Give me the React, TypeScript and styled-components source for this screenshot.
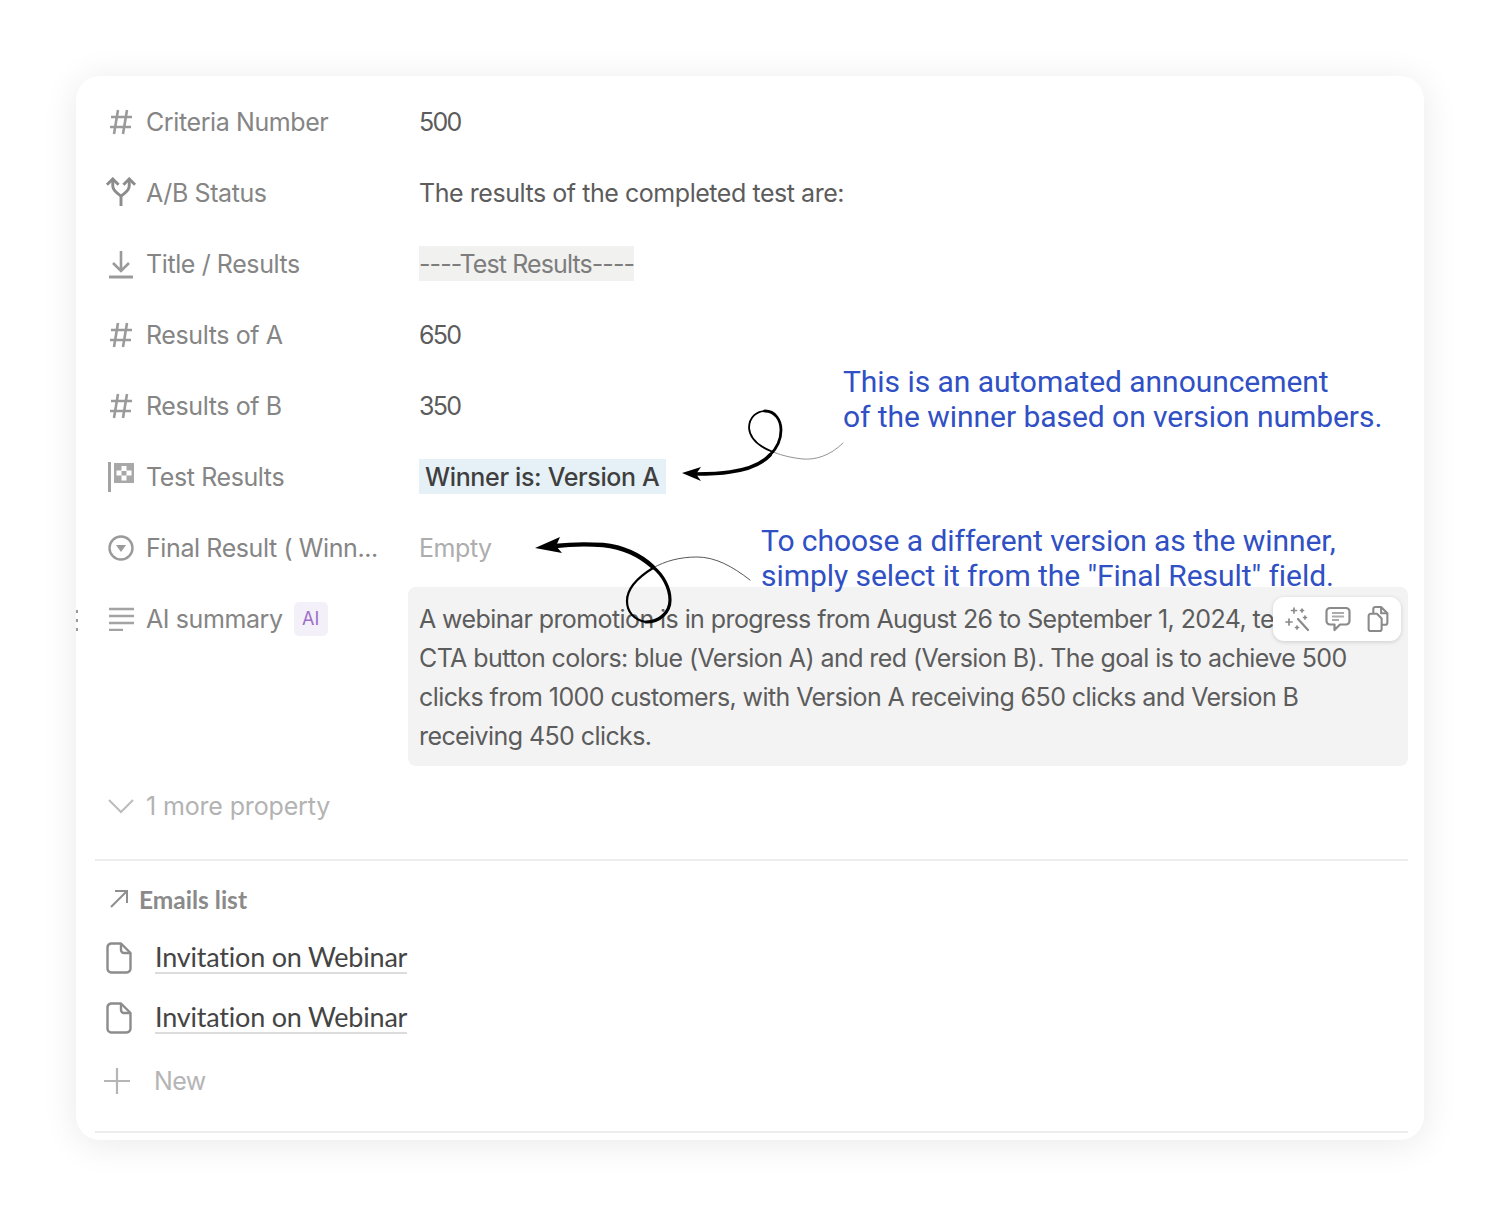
import React from 'react';
import styled, { createGlobalStyle } from 'styled-components';

const GlobalStyle = createGlobalStyle`
  html, body { margin: 0; padding: 0; background: #fff; }
  body { font-family: 'Inter', 'Noto Sans', sans-serif; }
`;

const HashIcon = () => (
  <IconSvg viewBox="0 0 26 30" fill="none" stroke="#9a9a9a" strokeWidth="2.6">
    <path d="M10 3 L6 27 M19 3 L15 27 M3 10 H24 M2 20 H23" />
  </IconSvg>
);

const SplitIcon = () => (
  <IconSvg viewBox="0 0 33 31" fill="none" stroke="#8c8c8c" strokeWidth="3" $wide>
    <path d="M16.5 30 V20 C13 16 8 15 8 9 V2 M16.5 20 C20 16 25 15 25 9 V2" />
    <path d="M2 8 L8 2 L14 8 M19 8 L25 2 L31 8" />
  </IconSvg>
);

const DownloadIcon = () => (
  <IconSvg viewBox="0 0 26 30" fill="none" stroke="#9a9a9a" strokeWidth="2.6">
    <path d="M13 2 V21 M5 14 L13 22 L21 14" />
    <path d="M1 28 H25" strokeWidth="3" />
  </IconSvg>
);

const FormulaIcon = () => (
  <IconSvg viewBox="0 0 26 30" fill="none">
    <path d="M1.5 0 V30" stroke="#a3a3a3" strokeWidth="3" />
    <path d="M6 1 H26 V21 H6 Z" fill="#a8a8a8" />
    <path d="M13.5 4 H18.5 V9 H13.5 Z M8.5 8.5 H13.5 V13.5 H8.5 Z M18.5 8.5 H23.5 V13.5 H18.5 Z M13.5 13.5 H18.5 V18.5 H13.5 Z" fill="#fff" />
  </IconSvg>
);

const SelectIcon = () => (
  <IconSvg viewBox="0 0 26 26" fill="none" stroke="#9a9a9a" strokeWidth="2.4">
    <circle cx="13" cy="13" r="11.5" />
    <path d="M8 10 H18 L13 17 Z" fill="#9a9a9a" stroke="none" />
  </IconSvg>
);

const LinesIcon = () => (
  <IconSvg viewBox="0 0 26 24" fill="none" stroke="#a3a3a3" strokeWidth="2.4">
    <path d="M1 2 H26 M1 9 H26 M1 16 H26 M1 23 H15" />
  </IconSvg>
);

const ChevronIcon = () => (
  <IconSvg viewBox="0 0 26 16" fill="none" stroke="#bcbcbc" strokeWidth="2">
    <path d="M1 2 L13 14 L25 2" />
  </IconSvg>
);

const DocIcon = () => (
  <DocSvg viewBox="0 0 26 32" fill="none" stroke="#8c8c8c" strokeWidth="2.4" strokeLinejoin="round">
    <path d="M5 1.5 H15 L24.5 11 V26 A4 4 0 0 1 20.5 30.5 H5 A4 4 0 0 1 1.5 26 V5 A4 4 0 0 1 5 1.5 Z" />
    <path d="M15 1.5 V8 A3 3 0 0 0 18 11 H24.5" />
  </DocSvg>
);

const Wand = () => (
  <ToolSvg viewBox="0 0 26 26" fill="none" stroke="#8a8a8a" strokeWidth="2.2" strokeLinecap="round">
    <path d="M14 13 L24 24" />
    <path d="M10 2 V7 M7.5 4.5 H12.5 M18 3 V6 M16.5 4.5 H19.5 M5 13 V19 M2 16 H8 M13 20 V23 M11.5 21.5 H14.5 M21 10 V13 M19.5 11.5 H22.5" strokeWidth="1.7" />
  </ToolSvg>
);

const Comment = () => (
  <ToolSvg viewBox="0 0 26 26" fill="none" stroke="#8a8a8a" strokeWidth="2.2" strokeLinejoin="round">
    <path d="M5 2 H21 A3.5 3.5 0 0 1 24.5 5.5 V15 A3.5 3.5 0 0 1 21 18.5 H15 L9.5 24 V18.5 H5 A3.5 3.5 0 0 1 1.5 15 V5.5 A3.5 3.5 0 0 1 5 2 Z" />
    <path d="M7 7 H19 M7 10.5 H19 M7 14 H14" stroke="#ababab" strokeWidth="2" />
  </ToolSvg>
);

const Copies = () => (
  <ToolSvg viewBox="0 0 20 25" fill="none" stroke="#8a8a8a" strokeWidth="2" strokeLinejoin="round">
    <path d="M3 7.5 H9 L13.5 12 V22 A2 2 0 0 1 11.5 24 H3 A2 2 0 0 1 1 22 V9.5 A2 2 0 0 1 3 7.5 Z" />
    <path d="M5.5 7.5 V3 A2 2 0 0 1 7.5 1 H13 L19 7 V16 A2 2 0 0 1 17 18 H13.5" />
    <path d="M13 1 V7 H19" />
  </ToolSvg>
);

export default function App() {
  const properties = [
    { icon: <HashIcon />, label: 'Criteria Number', value: <Value $digits>500</Value> },
    { icon: <SplitIcon />, label: 'A/B Status', value: <Value>The results of the completed test are:</Value> },
    { icon: <DownloadIcon />, label: 'Title / Results', value: <Tag>----Test Results----</Tag> },
    { icon: <HashIcon />, label: 'Results of A', value: <Value $digits>650</Value> },
    { icon: <HashIcon />, label: 'Results of B', value: <Value $digits>350</Value> },
    { icon: <FormulaIcon />, label: 'Test Results', value: <Tag $winner>Winner is: Version A</Tag> },
    { icon: <SelectIcon />, label: 'Final Result ( Winn...', value: <Value $empty>Empty</Value> },
  ];

  return (
    <Page>
      <GlobalStyle />
      <Card>
        <DragDots>
          <i />
          <i />
          <i />
        </DragDots>

        {properties.map((p) => (
          <Row key={p.label}>
            <Label>
              <IconSlot>{p.icon}</IconSlot>
              <span>{p.label}</span>
            </Label>
            <div>{p.value}</div>
          </Row>
        ))}

        <SummaryRow>
          <Label $summary>
            <IconSlot>
              <LinesIcon />
            </IconSlot>
            <span>AI summary</span>
            <AiBadge>AI</AiBadge>
          </Label>
          <SummaryBox>
            A webinar promotion is in progress from August 26 to September 1, 2024, testing two CTA button colors: blue
            (Version A) and red (Version B). The goal is to achieve 500 clicks from 1000 customers, with Version A
            receiving 650 clicks and Version B receiving 450 clicks.
            <Toolbar>
              <Wand />
              <Comment />
              <Copies />
            </Toolbar>
          </SummaryBox>
        </SummaryRow>

        <MoreRow>
          <IconSlot>
            <ChevronIcon />
          </IconSlot>
          <span>1 more property</span>
        </MoreRow>

        <Divider />

        <RelationTitle>
          <svg width="20" height="20" viewBox="0 0 20 20" fill="none" stroke="#8f8f8f" strokeWidth="2">
            <path d="M2 18 L18 2 M6 2 H18 V14" />
          </svg>
          <span>Emails list</span>
        </RelationTitle>

        <LinkRow>
          <DocIcon />
          <LinkText>Invitation on Webinar</LinkText>
        </LinkRow>
        <LinkRow>
          <DocIcon />
          <LinkText>Invitation on Webinar</LinkText>
        </LinkRow>

        <NewRow>
          <svg width="28" height="28" viewBox="0 0 28 28" fill="none" stroke="#b5b5b5" strokeWidth="2.2">
            <path d="M14 1 V27 M1 14 H27" />
          </svg>
          <span>New</span>
        </NewRow>

        <BottomDivider />

        <Note $top={288} $left={767}>
          This is an automated announcement
          <br />
          of the winner based on version numbers.
        </Note>
        <Note $top={447} $left={685}>
          To choose a different version as the winner,
          <br />
          simply select it from the "Final Result" field.
        </Note>

        <Arrows viewBox="76 76 1348 1064" fill="none" stroke="#000" strokeLinecap="round">
          <path d="M843 443 C830 456 815 460 803 459 C793 458 783 456 773 452" stroke="#777" strokeWidth="0.8" />
          <path d="M773 452 C760 447 750 440 749 428 C749 417 757 411 765 411" strokeWidth="1.8" />
          <path d="M765 411 C775 411 781 420 781 430 C781 440 776 449 770 455" strokeWidth="2.8" />
          <path d="M770 455 C760 466 745 470 730 472 C718 474 706 474 695 474" strokeWidth="3.6" />
          <path d="M682 473 L701 467 L696 474 L701 481 Z" fill="#000" stroke="none" />

          <path d="M750 580 C732 566 715 557 697 557 C680 557 665 561 653 568" stroke="#444" strokeWidth="0.9" />
          <path d="M653 568 C640 576 627 587 627 601 C627 612 634 620 646 622" strokeWidth="2.2" />
          <path d="M646 622 C660 622 670 612 670 600 C670 588 663 575 653 567" strokeWidth="3.2" />
          <path d="M653 567 C640 555 622 547 603 545 C588 544 572 544 555 546" strokeWidth="4.4" />
          <path d="M535 548 L560 537 L556 546 L562 553 Z" fill="#000" stroke="none" />
        </Arrows>
      </Card>
    </Page>
  );
}

const Page = styled.div`
  padding: 76px 76px 75px;
  height: 1215px;
  box-sizing: border-box;
`;

const Card = styled.div`
  position: relative;
  width: 1348px;
  height: 1064px;
  box-sizing: border-box;
  padding: 10px 16px 0 19px;
  background: #fff;
  border-radius: 24px;
  box-shadow: 0 4px 36px rgba(0, 0, 0, 0.09);
`;

const DragDots = styled.div`
  position: absolute;
  left: 0;
  top: 534px;
  display: flex;
  flex-direction: column;
  gap: 6px;

  i {
    display: block;
    width: 2px;
    height: 3px;
    background: #9a9a9a;
  }
`;

const Row = styled.div`
  display: grid;
  grid-template-columns: 324px 1fr;
  align-items: center;
  height: 71px;
`;

const Label = styled.div<{ $summary?: boolean }>`
  display: flex;
  align-items: center;
  height: ${(p) => (p.$summary ? '64px' : '34px')};
  font-size: 25px;
  letter-spacing: -0.4px;
  color: #858585;
  white-space: nowrap;
`;

const IconSlot = styled.div`
  display: flex;
  align-items: center;
  justify-content: center;
  width: 51px;
  flex: none;
`;

const IconSvg = styled.svg<{ $wide?: boolean }>`
  display: block;
  width: ${(p) => (p.$wide ? '32px' : '26px')};
  height: auto;
  max-height: 32px;
`;

const Value = styled.span<{ $empty?: boolean; $digits?: boolean }>`
  font-size: 25px;
  letter-spacing: ${(p) => (p.$digits ? '-1.7px' : '-0.45px')};
  color: ${(p) => (p.$empty ? '#adadad' : '#5c5c5c')};
`;

const Tag = styled.span<{ $winner?: boolean }>`
  display: inline-block;
  height: 35px;
  line-height: 37px;
  padding: 0 ${(p) => (p.$winner ? '6px' : '0')};
  font-size: 25px;
  letter-spacing: ${(p) => (p.$winner ? '-0.35px' : '-0.9px')};
  font-weight: ${(p) => (p.$winner ? 500 : 400)};
  color: ${(p) => (p.$winner ? '#3f3f3f' : '#7d7d7d')};
  background: ${(p) => (p.$winner ? '#e6f1f7' : '#f1f1ef')};
`;

const SummaryRow = styled.div`
  display: grid;
  grid-template-columns: 313px 1fr;
  margin-top: 4px;
`;

const AiBadge = styled.span`
  margin-left: 11px;
  width: 34px;
  height: 34px;
  line-height: 34px;
  text-align: center;
  border-radius: 5px;
  background: #f4f0f9;
  color: #9b6fc8;
  font-size: 18px;
  letter-spacing: 0;
`;

const SummaryBox = styled.div`
  position: relative;
  box-sizing: border-box;
  height: 179px;
  padding: 13px 3px 0 11px;
  background: #f3f3f3;
  border-radius: 8px;
  font-size: 25px;
  line-height: 39px;
  letter-spacing: -0.58px;
  color: #5c5c5c;
`;

const Toolbar = styled.div`
  position: absolute;
  top: 10px;
  right: 7px;
  display: flex;
  align-items: center;
  justify-content: space-between;
  box-sizing: border-box;
  width: 128px;
  height: 44px;
  padding: 0 10px 0 11px;
  background: #fff;
  border-radius: 11px;
  box-shadow: 0 1px 4px rgba(0, 0, 0, 0.16);
`;

const ToolSvg = styled.svg`
  width: 26px;
  height: 26px;
`;

const MoreRow = styled.div`
  display: flex;
  align-items: center;
  height: 71px;
  margin-top: 4px;
  font-size: 25px;
  letter-spacing: -0.15px;
  color: #b3b3b3;
`;

const Divider = styled.div`
  height: 2px;
  margin-top: 18px;
  background: #ececec;
`;

const RelationTitle = styled.div`
  display: flex;
  align-items: center;
  gap: 10px;
  height: 34px;
  margin: 21px 0 12px;
  padding-left: 14px;
  font-family: 'Lato', 'Inter', sans-serif;
  font-size: 24.5px;
  font-weight: 700;
  color: #8a8a8a;
`;

const LinkRow = styled.div`
  display: flex;
  align-items: center;
  height: 60px;
  padding-left: 11px;
`;

const DocSvg = styled.svg`
  width: 26px;
  height: 32px;
  margin-right: 23px;
`;

const LinkText = styled.span`
  font-family: 'Lato', 'Inter', sans-serif;
  font-size: 27px;
  font-weight: 400;
  line-height: 30px;
  letter-spacing: -0.2px;
  color: #444;
  border-bottom: 2px solid #dcdcdc;
`;

const NewRow = styled.div`
  display: flex;
  align-items: center;
  gap: 23px;
  height: 66px;
  padding-left: 8px;
  font-size: 25px;
  letter-spacing: -0.55px;
  color: #b5b5b5;
`;

const BottomDivider = styled.div`
  height: 2px;
  margin-top: 17px;
  background: #ececec;
`;

const Note = styled.div<{ $top: number; $left: number }>`
  position: absolute;
  top: ${(p) => p.$top}px;
  left: ${(p) => p.$left}px;
  font-family: 'Roboto', 'Liberation Sans', sans-serif;
  font-size: 30px;
  line-height: 35px;
  letter-spacing: -0.05px;
  color: #3050c4;
  white-space: nowrap;
`;

const Arrows = styled.svg`
  position: absolute;
  inset: 0;
  width: 100%;
  height: 100%;
  pointer-events: none;
`;
